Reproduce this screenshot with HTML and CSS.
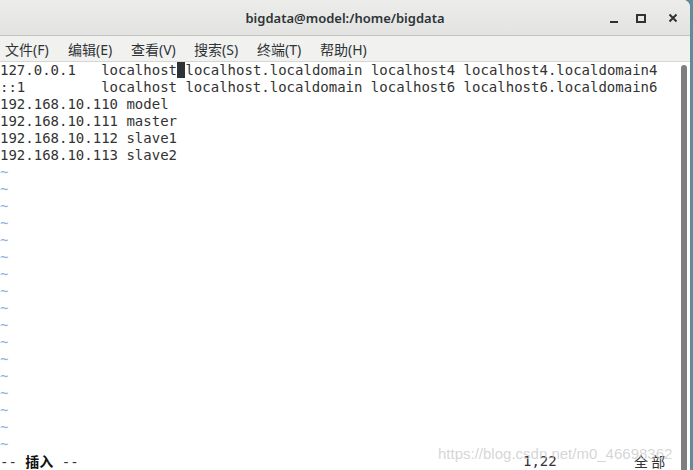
FILE: index.html
```html
<!DOCTYPE html>
<html lang="zh-CN">
<head>
    <meta charset="UTF-8">
    <title>bigdata@model:/home/bigdata</title>
    <link rel="stylesheet" href="styles.css">
</head>
<body>
    <div class="window">
        <div class="titlebar">
            <div class="title">bigdata@model:/home/bigdata</div>
            <div class="controls">
                <span class="ctl min"></span>
                <span class="ctl max"></span>
                <span class="ctl close">
                    <svg width="10" height="10" viewBox="0 0 10 10"><path d="M1.5 1.5 L8.5 8.5 M8.5 1.5 L1.5 8.5" stroke="#2e3436" stroke-width="2"/></svg>
                </span>
            </div>
        </div>

        <div class="menubar">
            <span class="menu">文件(F)</span>
            <span class="menu">编辑(E)</span>
            <span class="menu">查看(V)</span>
            <span class="menu">搜索(S)</span>
            <span class="menu">终端(T)</span>
            <span class="menu">帮助(H)</span>
        </div>

        <div class="term">
            <div class="screen">
<pre class="line">127.0.0.1   localhost<span class="cursor"> </span>localhost.localdomain localhost4 localhost4.localdomain4</pre>
<pre class="line">::1         localhost localhost.localdomain localhost6 localhost6.localdomain6</pre>
<pre class="line">192.168.10.110 model</pre>
<pre class="line">192.168.10.111 master</pre>
<pre class="line">192.168.10.112 slave1</pre>
<pre class="line">192.168.10.113 slave2</pre>
<pre class="line tilde">~</pre>
<pre class="line tilde">~</pre>
<pre class="line tilde">~</pre>
<pre class="line tilde">~</pre>
<pre class="line tilde">~</pre>
<pre class="line tilde">~</pre>
<pre class="line tilde">~</pre>
<pre class="line tilde">~</pre>
<pre class="line tilde">~</pre>
<pre class="line tilde">~</pre>
<pre class="line tilde">~</pre>
<pre class="line tilde">~</pre>
<pre class="line tilde">~</pre>
<pre class="line tilde">~</pre>
<pre class="line tilde">~</pre>
<pre class="line tilde">~</pre>
<pre class="line tilde">~</pre>
                <div class="line status">
                    <span class="mode">-- <b class="cjk">插入</b> --</span>
                    <span class="ruler">1,22</span>
                    <span class="all cjk">全 部</span>
                </div>
                <div class="watermark">https://blog.csdn.net/m0_46698362</div>
            </div>
            <div class="scrollbar"><div class="thumb"></div></div>
        </div>
    </div>
</body>
</html>
```

FILE: styles.css
```css
html, body {
    margin: 0;
    padding: 0;
}
body {
    width: 693px;
    height: 470px;
    overflow: hidden;
    background-color: #5d8d99;
}
.window {
    width: 690px;
    height: 470px;
    background: #ffffff;
    border-top-right-radius: 7px;
    overflow: hidden;
    display: flex;
    flex-direction: column;
}
.titlebar {
    height: 35px;
    flex: none;
    background: linear-gradient(#ececeb, #e3e3e2);
    border-bottom: 1px solid #c3c3c0;
    display: flex;
    align-items: center;
    justify-content: center;
    position: relative;
    font-family: "Noto Sans", "DejaVu Sans", sans-serif;
}
.title {
    font-size: 13px;
    font-weight: 600;
    color: #2e3436;
}
.controls {
    position: absolute;
    right: 0;
    top: 0;
    height: 35px;
    display: flex;
    align-items: center;
}
.ctl {
    width: 30px;
    height: 20px;
    display: flex;
    align-items: center;
    justify-content: center;
}
.min {
    width: 24px;
}
.close {
    width: 34px;
}
.min::before {
    content: "";
    width: 8px;
    height: 2px;
    background: #2e3436;
    margin-top: 8px;
}
.max::before {
    content: "";
    width: 6px;
    height: 5px;
    border: 2px solid #2e3436;
    margin-top: 1px;
}
.menubar {
    height: 25px;
    flex: none;
    background: #f1f1f0;
    border-bottom: 1px solid #d6d6d3;
    display: flex;
    align-items: center;
    gap: 12px;
    padding-left: 5px;
    font-family: "Noto Sans", "Noto Sans CJK SC", sans-serif;
    font-size: 14px;
    color: #2e3436;
}
.menu {
    width: 51px;
    white-space: nowrap;
}
.term {
    flex: 1;
    display: flex;
    min-height: 0;
}
.screen {
    flex: 1;
    position: relative;
    overflow: hidden;
}
.line {
    margin: 0;
    height: 17px;
    line-height: 17px;
    font-family: "DejaVu Sans Mono", monospace;
    font-size: 14px;
    color: #333333;
    white-space: pre;
}
.cursor {
    background: #2e3436;
}
.tilde {
    color: #8fb3dd;
}
.status {
    display: flex;
}
.mode {
    width: 523px;
}
.mode b {
    font-weight: bold;
    color: #111;
}
.cjk {
    font-family: "Noto Sans CJK SC", sans-serif;
    font-size: 14px;
}
.ruler {
    width: 111px;
}
.all {
    color: #333;
}
.watermark {
    position: absolute;
    left: 438px;
    top: 383px;
    font-family: "Liberation Sans", sans-serif;
    font-size: 15px;
    color: rgba(200, 200, 200, 0.75);
    white-space: nowrap;
}
.scrollbar {
    width: 12px;
    flex: none;
    background: #ffffff;
    padding-top: 3px;
    display: flex;
    justify-content: center;
}
.thumb {
    width: 6px;
    height: 420px;
    background: #7f807d;
    border-radius: 3px;
}
```
